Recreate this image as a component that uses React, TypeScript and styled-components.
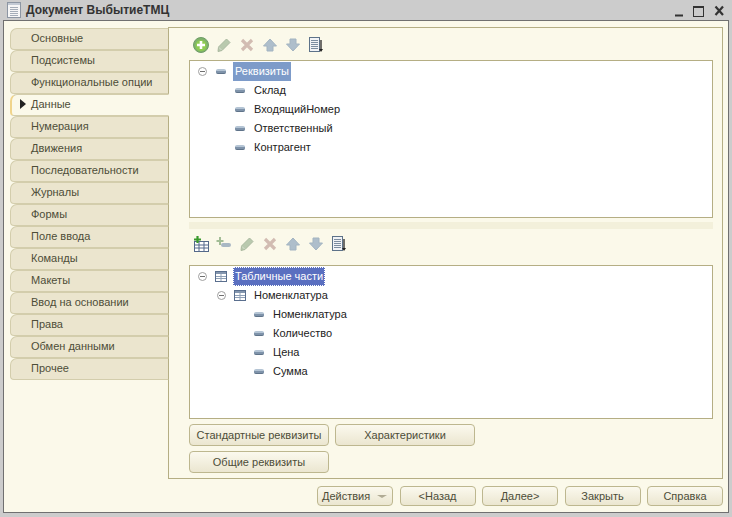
import styled, { createGlobalStyle } from 'styled-components';

const GlobalStyle = createGlobalStyle`
  html, body {
    margin: 0;
    padding: 0;
    background: #cccccc;
  }
`;

const tabs = [
  'Основные',
  'Подсистемы',
  'Функциональные опции',
  'Данные',
  'Нумерация',
  'Движения',
  'Последовательности',
  'Журналы',
  'Формы',
  'Поле ввода',
  'Команды',
  'Макеты',
  'Ввод на основании',
  'Права',
  'Обмен данными',
  'Прочее',
];

function DocIcon() {
  return (
    <svg width="16" height="16" viewBox="0 0 16 16">
      <rect x="1.5" y="0.5" width="13" height="15" fill="#f6f6f6" stroke="#8d96a3" />
      <rect x="2" y="1" width="12" height="2" fill="#c3cad4" />
      <path d="M4 5.5h8M4 7.5h8M4 9.5h8M4 11.5h8M4 13.5h8" stroke="#a5adb8" />
    </svg>
  );
}

function AddIcon() {
  return (
    <svg width="16" height="16" viewBox="0 0 16 16">
      <circle cx="8" cy="8" r="7.5" fill="#7fb36a" stroke="#6f9c68" />
      <circle cx="8" cy="8.5" r="5.5" fill="#8ecb52" />
      <path d="M8 4v8M4 8h8" stroke="#fff" strokeWidth="2.6" />
    </svg>
  );
}

function PencilIcon() {
  return (
    <svg width="14" height="14" viewBox="0 0 14 14">
      <path d="M1 13.500l.5-4.500L9.500 1l3.500 3.500-8 8z" fill="#b9c9ae" stroke="#a9b89f" />
      <path d="M2 9.500l2.500 2.500" stroke="#d8e0d0" />
    </svg>
  );
}

function CrossIcon() {
  return (
    <svg width="14" height="14" viewBox="0 0 14 14">
      <path d="M2 2l10 10M12 2L2 12" stroke="#d2bcb2" strokeWidth="3.200" />
    </svg>
  );
}

function ArrowIcon({ down }: { down?: boolean }) {
  return (
    <svg width="14" height="14" viewBox="0 0 14 14">
      <path
        d={down ? 'M4 1h6v5h3.500L7 13 .5 6H4z' : 'M7 1l6.500 7H10v5H4V8H.5z'}
        fill="#aebecb"
        stroke="#a3b4c1"
      />
    </svg>
  );
}

function ListIcon() {
  return (
    <svg width="14" height="16" viewBox="0 0 14 16">
      <rect x="0.500" y="0.500" width="10" height="14" fill="#f1f3f6" stroke="#5d7289" />
      <path d="M2 3.500h7M2 5.500h7M2 7.500h7M2 9.500h7M2 11.500h7" stroke="#7c8da0" />
      <path d="M12 3v10" stroke="#333" strokeWidth="1.400" />
      <path d="M10 12h4l-2 3z" fill="#222" />
    </svg>
  );
}

function TableIcon() {
  return (
    <TableSlot>
      <svg width="12" height="11" viewBox="0 0 12 11">
        <rect x="0.500" y="0.500" width="11" height="10" fill="#fff" stroke="#5a6f8e" />
        <rect x="1" y="1" width="10" height="2" fill="#8496ae" />
        <path d="M6 3v7M1 5.500h10M1 7.500h10" stroke="#8fa0b6" />
      </svg>
    </TableSlot>
  );
}

function AddTableIcon() {
  return (
    <svg width="16" height="16" viewBox="0 0 16 16">
      <rect x="1.500" y="5.500" width="14" height="10" fill="#fff" stroke="#54698a" />
      <path d="M6 6v9M11 6v9M2 9h13M2 12h13" stroke="#54698a" />
      <path d="M4.500 0v7M1 3.500h7" stroke="#3a9a2c" strokeWidth="2.200" />
    </svg>
  );
}

function AddAttrIcon() {
  return (
    <svg width="16" height="14" viewBox="0 0 16 14">
      <path d="M4 0v8M0.500 4h7" stroke="#a3bd96" strokeWidth="2" />
      <rect x="5" y="6" width="10" height="4" rx="2" fill="#a9b8c4" />
    </svg>
  );
}

function TopToolbar() {
  return (
    <Toolbar $height={32} $top={9}>
      <ToolSlot><AddIcon /></ToolSlot>
      <ToolSlot><PencilIcon /></ToolSlot>
      <ToolSlot><CrossIcon /></ToolSlot>
      <ToolSlot><ArrowIcon /></ToolSlot>
      <ToolSlot><ArrowIcon down /></ToolSlot>
      <ToolSlot><ListIcon /></ToolSlot>
    </Toolbar>
  );
}

function BottomToolbar() {
  return (
    <Toolbar $height={36} $top={7}>
      <ToolSlot><AddTableIcon /></ToolSlot>
      <ToolSlot><AddAttrIcon /></ToolSlot>
      <ToolSlot><PencilIcon /></ToolSlot>
      <ToolSlot><CrossIcon /></ToolSlot>
      <ToolSlot><ArrowIcon /></ToolSlot>
      <ToolSlot><ArrowIcon down /></ToolSlot>
      <ToolSlot><ListIcon /></ToolSlot>
    </Toolbar>
  );
}

export default function App() {
  return (
    <>
      <GlobalStyle />
      <Page>
        <TitleBar>
          <TitleLeft>
            <DocIcon />
            <Title>Документ ВыбытиеТМЦ</Title>
          </TitleLeft>
          <WindowControls>
            <svg width="60" height="14" viewBox="0 0 60 14">
              <path d="M6 11.500h8" stroke="#333" strokeWidth="2" />
              <rect x="24.500" y="2.500" width="10" height="10" fill="none" stroke="#333" />
              <path d="M24 3h11" stroke="#333" strokeWidth="2" />
              <path d="M46.500 2.500l7.500 8.500M54 2.500L46.500 11" stroke="#333" strokeWidth="2.200" />
            </svg>
          </WindowControls>
        </TitleBar>
        <Frame>
          <Main>
            <TabColumn>
              {tabs.map((tab) => (
                <Tab key={tab} $active={tab === 'Данные'}>
                  {tab === 'Данные' && <Marker />}
                  {tab}
                </Tab>
              ))}
            </TabColumn>
            <Panel>
              <TopToolbar />
              <TreeBox $height={158} $top={1}>
                <TreeRow $level={0}>
                  <ToggleBox />
                  <AttrBar />
                  <RowLabel $state="muted">Реквизиты</RowLabel>
                </TreeRow>
                <TreeRow $level={1}><AttrBar /><RowLabel>Склад</RowLabel></TreeRow>
                <TreeRow $level={1}><AttrBar /><RowLabel>ВходящийНомер</RowLabel></TreeRow>
                <TreeRow $level={1}><AttrBar /><RowLabel>Ответственный</RowLabel></TreeRow>
                <TreeRow $level={1}><AttrBar /><RowLabel>Контрагент</RowLabel></TreeRow>
              </TreeBox>
              <Splitter />
              <BottomToolbar />
              <TreeBox $height={154} $top={0}>
                <TreeRow $level={0} $tall>
                  <ToggleBox />
                  <TableIcon />
                  <RowLabel $state="focused">Табличные части</RowLabel>
                </TreeRow>
                <TreeRow $level={2}>
                  <ToggleBox />
                  <TableIcon />
                  <RowLabel>Номенклатура</RowLabel>
                </TreeRow>
                <TreeRow $level={3}><AttrBar /><RowLabel>Номенклатура</RowLabel></TreeRow>
                <TreeRow $level={3}><AttrBar /><RowLabel>Количество</RowLabel></TreeRow>
                <TreeRow $level={3}><AttrBar /><RowLabel>Цена</RowLabel></TreeRow>
                <TreeRow $level={3}><AttrBar /><RowLabel>Сумма</RowLabel></TreeRow>
              </TreeBox>
              <PanelButtons>
                <Button $width={140} $height={22}>Стандартные реквизиты</Button>
                <Button $width={140} $height={22}>Характеристики</Button>
                <Button $width={140} $height={22}>Общие реквизиты</Button>
              </PanelButtons>
            </Panel>
          </Main>
          <Footer>
            <DropButton>
              Действия
              <DropArrow />
            </DropButton>
            <Button $width={76} $height={20}>&lt;Назад</Button>
            <Button $width={76} $height={20}>Далее&gt;</Button>
            <Button $width={76} $height={20}>Закрыть</Button>
            <Button $width={76} $height={20}>Справка</Button>
          </Footer>
        </Frame>
      </Page>
    </>
  );
}

const Page = styled.div`
  width: 732px;
  height: 517px;
  box-sizing: border-box;
  padding: 0 3px 4px 3px;
  background: #cccccc;
  display: flex;
  flex-direction: column;
  font-family: 'Liberation Sans', Arial, sans-serif;
  font-size: 11px;
  color: #4a4a36;
  overflow: hidden;
`;

const TitleBar = styled.div`
  height: 20px;
  flex: none;
  display: flex;
  align-items: center;
  justify-content: space-between;
  padding: 0 0 0 3px;
`;

const TitleLeft = styled.div`
  display: flex;
  align-items: center;
  gap: 4px;
`;

const Title = styled.div`
  font-size: 12px;
  font-weight: bold;
  color: #333333;
`;

const WindowControls = styled.div`
  display: flex;
  padding-top: 1px;
`;

const Frame = styled.div`
  flex: 1;
  box-sizing: border-box;
  border: 1px solid #707070;
  background: #fbf9ea;
  padding: 6px 5px 6px 6px;
  display: flex;
  flex-direction: column;
`;

const Main = styled.div`
  display: flex;
  align-items: flex-start;
`;

const TabColumn = styled.div`
  width: 159px;
  flex: none;
  padding-top: 1px;
  margin-right: -1px;
  position: relative;
  z-index: 1;
`;

const Tab = styled.div<{ $active?: boolean }>`
  height: 22px;
  box-sizing: border-box;
  padding: 0 0 2px ${({ $active }) => ($active ? '8px' : '20px')};
  display: flex;
  align-items: center;
  background: ${({ $active }) => ($active ? '#fbf9ea' : '#ebe5ce')};
  border: 1px solid #d3cdac;
  border-right: ${({ $active }) => ($active ? '1px solid #fbf9ea' : '1px solid #b5ae84')};
  border-left: ${({ $active }) => ($active ? '2px solid #f0d48c' : '1px solid #d3cdac')};
  border-top-left-radius: 7px;
  border-bottom-left-radius: 4px;
  color: #4d4d38;
  white-space: nowrap;
`;

const Marker = styled.span`
  width: 0;
  height: 0;
  border-left: 6px solid #222222;
  border-top: 5px solid transparent;
  border-bottom: 5px solid transparent;
  margin-right: 5px;
`;

const Panel = styled.div`
  width: 555px;
  height: 452px;
  flex: none;
  box-sizing: border-box;
  border: 1px solid #b5ae84;
  padding: 0 9px 0 20px;
`;

const Toolbar = styled.div<{ $height: number; $top: number }>`
  height: ${({ $height }) => $height}px;
  box-sizing: border-box;
  padding-top: ${({ $top }) => $top}px;
  display: flex;
  align-items: flex-start;
`;

const ToolSlot = styled.div`
  width: 23px;
  height: 16px;
  flex: none;
  display: flex;
  align-items: center;
  justify-content: center;
`;

const TreeBox = styled.div<{ $height: number; $top: number }>`
  height: ${({ $height }) => $height}px;
  box-sizing: border-box;
  border: 1px solid #b5ae84;
  background: #ffffff;
  padding-top: ${({ $top }) => $top}px;
`;

const TreeRow = styled.div<{ $level: number; $tall?: boolean }>`
  height: ${({ $tall }) => ($tall ? 20 : 19)}px;
  display: flex;
  align-items: center;
  padding-left: ${({ $level }) => [8, 45, 27, 64][$level]}px;
  color: #222222;
  white-space: nowrap;
`;

const ToggleBox = styled.span`
  width: 7px;
  height: 7px;
  flex: none;
  border: 1px solid #a0a0a0;
  border-radius: 50%;
  margin-right: 9px;
  position: relative;
  &::after {
    content: '';
    position: absolute;
    left: 1px;
    top: 3px;
    width: 5px;
    height: 1px;
    background: #707070;
  }
`;

const TableSlot = styled.span`
  display: flex;
  flex: none;
  margin: 0 -1px;
`;

const AttrBar = styled.span`
  width: 10px;
  height: 5px;
  flex: none;
  border-radius: 2px;
  background: #7f93aa;
  border-top: 2px solid #b4c4d4;
  border-bottom: 1px solid #5f7389;
  box-sizing: border-box;
`;

const RowLabel = styled.span<{ $state?: 'muted' | 'focused' }>`
  margin-left: 7px;
  padding: 0 2px;
  height: 19px;
  line-height: 18px;
  box-sizing: border-box;
  color: ${({ $state }) => ($state ? '#ffffff' : '#222222')};
  background: ${({ $state }) =>
    $state === 'focused' ? '#5a6fc0' : $state === 'muted' ? '#7d9bc9' : 'transparent'};
  outline: ${({ $state }) => ($state === 'focused' ? '1px dotted #ffffff' : 'none')};
  outline-offset: -1px;
`;

const Splitter = styled.div`
  height: 7px;
  margin-top: 4px;
  background: #f3f0db;
`;

const PanelButtons = styled.div`
  display: grid;
  grid-template-columns: 140px 140px;
  column-gap: 6px;
  row-gap: 5px;
  margin-top: 5px;
`;

const Button = styled.div<{ $width: number; $height: number }>`
  width: ${({ $width }) => $width}px;
  height: ${({ $height }) => $height}px;
  box-sizing: border-box;
  border: 1px solid #bdb78f;
  border-radius: 4px;
  background: linear-gradient(#fbf9ee, #ebe6d0);
  display: flex;
  align-items: center;
  justify-content: center;
  color: #4d4d38;
  white-space: nowrap;
`;

const Footer = styled.div`
  margin-top: 7px;
  display: flex;
  justify-content: flex-end;
  gap: 6.5px;
`;

const DropButton = styled.div`
  width: 76px;
  height: 20px;
  box-sizing: border-box;
  border: 1px solid #bdb78f;
  border-radius: 4px;
  background: linear-gradient(#fbf9ee, #ebe6d0);
  display: flex;
  align-items: center;
  justify-content: space-between;
  padding: 0 5px 0 4px;
  color: #4d4d38;
`;

const DropArrow = styled.span`
  width: 0;
  height: 0;
  border-top: 3px solid #b0ab94;
  border-left: 5px solid transparent;
  border-right: 5px solid transparent;
`;
